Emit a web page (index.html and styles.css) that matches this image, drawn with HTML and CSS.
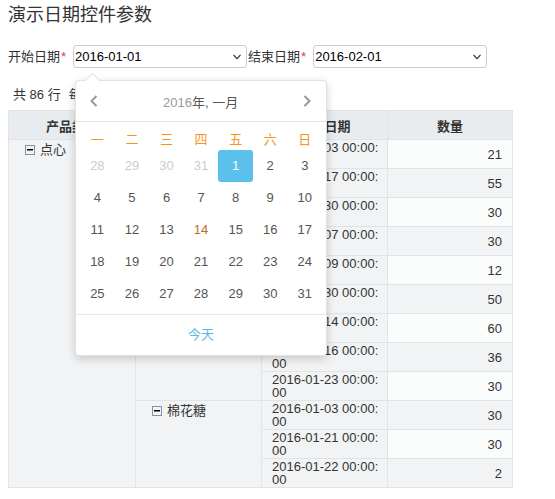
FILE: index.html
```html
<!DOCTYPE html>
<html lang="zh">
<head>
  <meta charset="UTF-8">
  <title>演示日期控件参数</title>
  <link rel="stylesheet" href="styles.css">
</head>
<body>
  <h1 class="page-title">演示日期控件参数</h1>

  <div class="filter-bar">
    <div class="field">
      <label class="field-label">开始日期<span class="req">*</span></label>
      <div class="date-select">
        <span class="date-value">2016-01-01</span>
        <svg class="caret" width="8" height="6" viewBox="0 0 8 6"><polyline points="0.5,0.8 4,4.6 7.5,0.8" fill="none" stroke="#333" stroke-width="1.2"/></svg>

        <div class="calendar">
          <div class="cal-head">
            <svg width="8" height="12" viewBox="0 0 8 12"><polyline points="6.5,1 1.5,6 6.5,11" fill="none" stroke="#999" stroke-width="2"/></svg>
            <span class="cal-title"><span class="cal-year">2016</span>年, 一月</span>
            <svg width="8" height="12" viewBox="0 0 8 12"><polyline points="1.5,1 6.5,6 1.5,11" fill="none" stroke="#999" stroke-width="2"/></svg>
          </div>
          <div class="cal-body">
            <div class="cal-weeks">
              <span>一</span><span>二</span><span>三</span><span>四</span><span>五</span><span>六</span><span>日</span>
            </div>
            <div class="cal-days">
              <span class="old">28</span><span class="old">29</span><span class="old">30</span><span class="old">31</span><span class="active">1</span><span>2</span><span>3</span>
              <span>4</span><span>5</span><span>6</span><span>7</span><span>8</span><span>9</span><span>10</span>
              <span>11</span><span>12</span><span>13</span><span class="holiday">14</span><span>15</span><span>16</span><span>17</span>
              <span>18</span><span>19</span><span>20</span><span>21</span><span>22</span><span>23</span><span>24</span>
              <span>25</span><span>26</span><span>27</span><span>28</span><span>29</span><span>30</span><span>31</span>
            </div>
          </div>
          <div class="cal-foot">今天</div>
        </div>
      </div>
    </div>

    <div class="field">
      <label class="field-label">结束日期<span class="req">*</span></label>
      <div class="date-select">
        <span class="date-value">2016-02-01</span>
        <svg class="caret" width="8" height="6" viewBox="0 0 8 6"><polyline points="0.5,0.8 4,4.6 7.5,0.8" fill="none" stroke="#333" stroke-width="1.2"/></svg>
      </div>
    </div>
  </div>

  <div class="pager"><span>共 86 行</span><span class="pager-size">每页 20 行</span></div>

  <table class="grid">
    <colgroup>
      <col style="width:127px">
      <col style="width:126px">
      <col style="width:126px">
      <col style="width:125px">
    </colgroup>
    <thead>
      <tr><th>产品类别</th><th>产品名称</th><th>订单日期</th><th>数量</th></tr>
    </thead>
    <tbody>
      <tr>
        <td class="tree" rowspan="12"><span class="toggle"></span>点心</td>
        <td class="tree" rowspan="9"><span class="toggle"></span>饼干</td>
        <td class="date">2016-01-03 00:00:00</td><td class="num">21</td>
      </tr>
      <tr class="even"><td class="date">2016-01-17 00:00:00</td><td class="num">55</td></tr>
      <tr><td class="date">2016-01-30 00:00:00</td><td class="num">30</td></tr>
      <tr class="even"><td class="date">2016-01-07 00:00:00</td><td class="num">30</td></tr>
      <tr><td class="date">2016-01-09 00:00:00</td><td class="num">12</td></tr>
      <tr class="even"><td class="date">2016-01-30 00:00:00</td><td class="num">50</td></tr>
      <tr><td class="date">2016-01-14 00:00:00</td><td class="num">60</td></tr>
      <tr class="even"><td class="date">2016-01-16 00:00:00</td><td class="num">36</td></tr>
      <tr><td class="date">2016-01-23 00:00:00</td><td class="num">30</td></tr>
      <tr class="even">
        <td class="tree" rowspan="3"><span class="toggle"></span>棉花糖</td>
        <td class="date">2016-01-03 00:00:00</td><td class="num">30</td>
      </tr>
      <tr><td class="date">2016-01-21 00:00:00</td><td class="num">30</td></tr>
      <tr class="even"><td class="date">2016-01-22 00:00:00</td><td class="num">2</td></tr>
    </tbody>
  </table>
</body>
</html>
```

FILE: styles.css
```css
body {
  font-family: 'Liberation Sans', 'Noto Sans CJK SC', sans-serif;
  margin: 0;
  padding: 0 8px;
  color: #333;
  font-size: 13px;
  background: #fff;
}

.page-title {
  font-size: 18px;
  font-weight: normal;
  line-height: 20px;
  margin: 5px 0 0;
  color: #333;
}

.filter-bar {
  display: flex;
  margin-top: 20px;
  height: 23px;
}

.field {
  display: flex;
  align-items: center;
}

.field + .field {
  margin-left: 1px;
}

.field-label {
  line-height: 23px;
}

.req {
  color: #e4393c;
  margin-left: 1px;
}

.date-select {
  position: relative;
  box-sizing: border-box;
  width: 174px;
  height: 23px;
  margin-left: 7px;
  border: 1px solid #ccc;
  border-radius: 3px;
  display: flex;
  align-items: center;
  justify-content: space-between;
  padding: 0 5px 0 1px;
  color: #000;
}

.caret {
  display: block;
}

.calendar {
  position: absolute;
  top: 34px;
  left: 1px;
  z-index: 10;
  width: 250px;
  background: #fff;
  border: 1px solid #e2e2e2;
  border-radius: 4px;
  box-shadow: 0 3px 10px rgba(0,0,0,0.18);
  color: #555;
}

.calendar::before {
  content: "";
  position: absolute;
  top: -6px;
  left: 11px;
  width: 10px;
  height: 10px;
  background: #fff;
  border-left: 1px solid #e2e2e2;
  border-top: 1px solid #e2e2e2;
  transform: rotate(45deg);
}

.cal-head {
  position: relative;
  height: 40px;
  display: flex;
  align-items: center;
  justify-content: space-between;
  padding: 0 15px 0 14px;
  border-bottom: 1px solid #e8e8e8;
}

.cal-title {
  color: #555;
}

.cal-year {
  color: #999;
}

.cal-body {
  padding: 8px 4px 4px;
  border-bottom: 1px solid #e8e8e8;
}

.cal-weeks,
.cal-days {
  display: grid;
  grid-template-columns: repeat(7, 1fr);
  text-align: center;
}

.cal-weeks span {
  height: 20px;
  line-height: 20px;
  color: #f7931e;
}

.cal-days span {
  height: 32px;
  line-height: 32px;
  border-radius: 3px;
}

.cal-days .old {
  color: #ccc;
}

.cal-days .holiday {
  color: #b96d26;
}

.cal-days .active {
  background: #5bc1ec;
  color: #fff;
}

.cal-foot {
  height: 40px;
  line-height: 40px;
  text-align: center;
  color: #5bb8e8;
}

.pager {
  margin-top: 17px;
  height: 20px;
  line-height: 20px;
  padding-left: 5px;
}

.pager-size {
  margin-left: 8px;
}

.grid {
  margin-top: 5px;
  border-collapse: collapse;
  table-layout: fixed;
  width: 504px;
  border: 1px solid #e0e3e7;
}

.grid th {
  height: 28px;
  padding: 0;
  background: #e9ecef;
  border: 1px solid #e0e3e7;
  font-weight: bold;
  text-align: center;
}

.grid td {
  height: 28px;
  padding: 0;
  border: 1px solid #e0e3e7;
  background: #f1f3f5;
}

.grid td.tree {
  vertical-align: top;
  padding: 1px 0 0 16px;
  line-height: 18px;
}

.toggle {
  display: inline-block;
  box-sizing: border-box;
  width: 10px;
  height: 10px;
  margin-right: 5px;
  vertical-align: -1px;
  border: 1px solid #7d93a8;
  background: linear-gradient(#000, #000) center / 6px 1.5px no-repeat;
}

.grid td.date {
  padding: 0 6px 0 10px;
  line-height: 13px;
  word-break: break-all;
}

.grid td.num {
  padding-right: 10px;
  text-align: right;
  background: #fbfcfc;
}

.grid tr.even td.num {
  background: #f1f3f5;
}
```
